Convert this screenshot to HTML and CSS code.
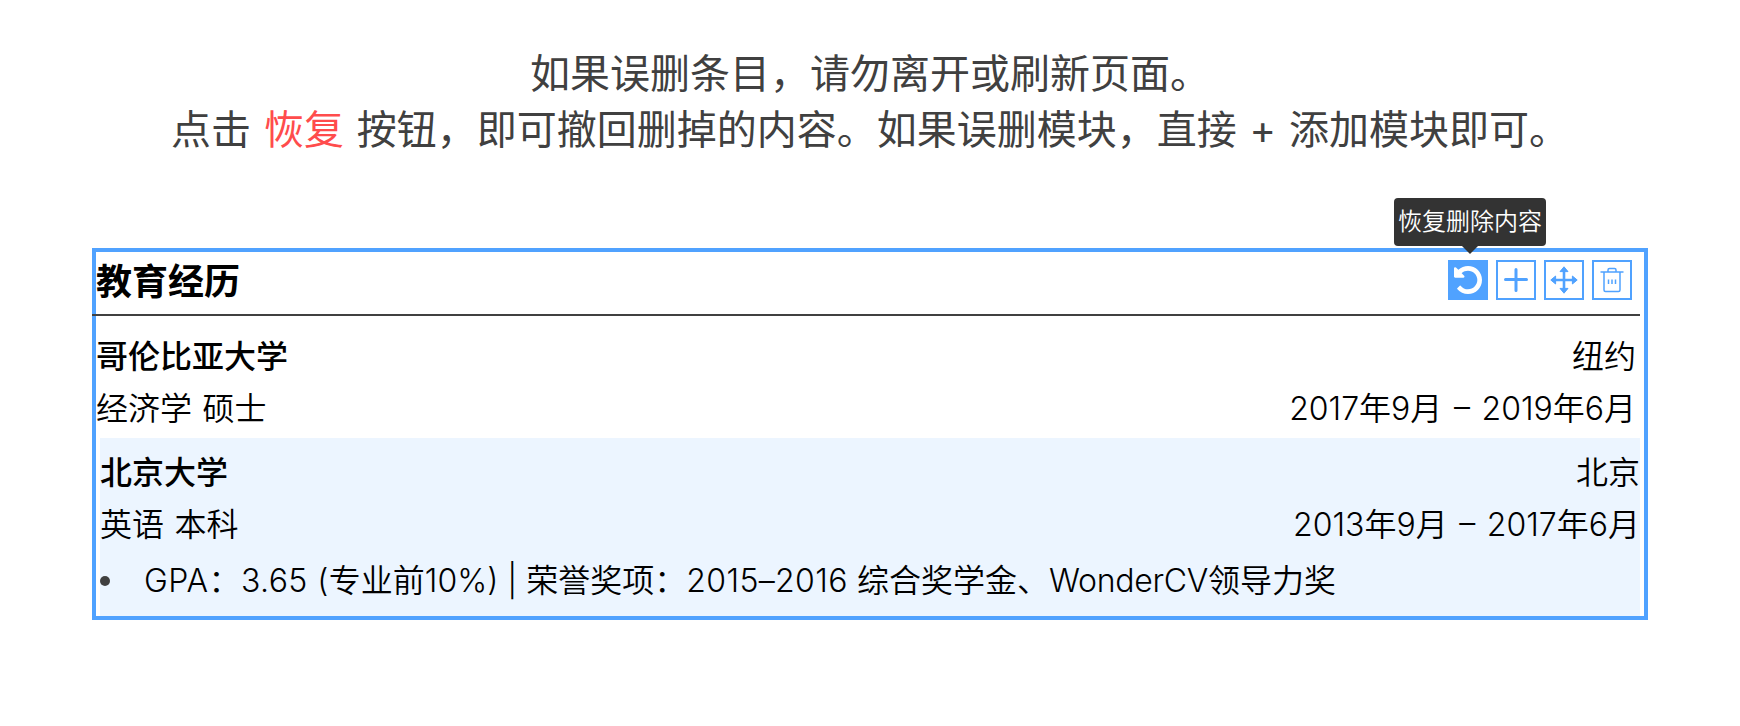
FILE: index.html
```html
<!DOCTYPE html>
<html lang="zh-CN">
<head>
<meta charset="utf-8">
<title>教育经历</title>
<link rel="stylesheet" href="styles.css">
</head>
<body>
<div class="intro">
  <p>如果误删条目，请勿离开或刷新页面。</p>
  <p>点击 <span class="accent">恢复</span> 按钮，即可撤回删掉的内容。如果误删模块，直接 + 添加模块即可。</p>
</div>
<section class="module">
  <header class="module-head">
    <h2>教育经历</h2>
    <div class="tools">
      <button class="tool active" aria-label="恢复删除内容">
        <svg width="28" height="28" viewBox="0 128 1536 1536"><path fill="currentColor" d="M1536 896q0 156-61 298t-164 245-245 164-298 61q-172 0-327-72.500t-264-204.500q-7-10-6.500-22.500t8.500-20.500l137-138q10-9 25-9 16 2 23 12 73 95 179 147t225 52q104 0 198.500-40.500t163.500-109.500 109.500-163.500 40.500-198.500-40.500-198.500-109.500-163.500-163.500-109.500-198.500-40.500q-98 0-188 35.500t-160 101.500l137 138q31 30 14 69-17 40-59 40h-448q-26 0-45-19t-19-45v-448q0-42 40-59 39-17 69 14l130 129q107-101 244.500-156.500t284.500-55.500q156 0 298 61t245 164 164 245 61 298z"/></svg>
        <span class="tip">恢复删除内容</span>
      </button>
      <button class="tool" aria-label="添加">
        <svg width="28" height="28" viewBox="0 0 28 28"><path fill="none" stroke="currentColor" stroke-width="3" stroke-linecap="round" d="M14 3.500v21M3.500 13.500h21"/></svg>
      </button>
      <button class="tool" aria-label="移动">
        <svg width="28" height="28" viewBox="0 0 28 28"><path fill="none" stroke="currentColor" stroke-width="2.600" d="M14 4v20M4 14h20"/><path fill="currentColor" stroke="currentColor" stroke-linejoin="round" d="M14 .8l4 4.800h-8zM14 27.200l4-4.800h-8zM.8 14l4.800-4v8zM27.200 14l-4.800-4v8z"/></svg>
      </button>
      <button class="tool" aria-label="删除">
        <svg width="28" height="28" viewBox="0 0 28 28"><path fill="none" stroke="currentColor" stroke-width="1.500" stroke-linejoin="round" d="M2.500 6h23M10 6V4q0-1.500 1.500-1.500h5Q18 2.500 18 4v2M6 6v18q0 1.500 1.500 1.500h13Q22 25.500 22 24V6"/><path fill="none" stroke="currentColor" stroke-width="1.500" d="M10.500 13.500v4.500M14 13.500v4.500M17.500 13.500v4.500"/></svg>
      </button>
    </div>
  </header>
  <article class="entry">
    <div class="row"><b>哥伦比亚大学</b><span>纽约</span></div>
    <div class="row"><span>经济学 硕士</span><span class="date">2017年9月 – 2019年6月</span></div>
  </article>
  <article class="entry selected">
    <div class="row"><b>北京大学</b><span>北京</span></div>
    <div class="row"><span>英语 本科</span><span class="date">2013年9月 – 2017年6月</span></div>
    <ul><li><p><span class="score">GPA：3.65 (</span>专业前10%) | 荣誉奖项：<span class="years">2015–2016 </span>综合奖学金、<span class="brand">WonderCV</span>领导力奖</p></li></ul>
  </article>
</section>
</body>
</html>
```
FILE: styles.css
```css
* { box-sizing: border-box; }
body {
  margin: 0;
  height: 726px;
  background: #fff;
  color: #000;
  font-family: Inter, "Noto Sans CJK SC", sans-serif;
  overflow: hidden;
}
p { margin: 0; }
.intro {
  padding-top: 46px;
  height: 248px;
  text-align: center;
  color: #404040;
  font-size: 40px;
  line-height: 56px;
  word-spacing: 1.6px;
  white-space: nowrap;
}
.accent { color: #ff4c4c; }
.module {
  width: 1556px;
  height: 372px;
  margin-left: 92px;
  border: 4px solid #50a2ff;
}
.module-head {
  display: flex;
  justify-content: space-between;
  width: 1548px;
  height: 64px;
  margin-left: -4px;
  padding: 8px 8px 0 4px;
  border-bottom: 2px solid #404040;
}
h2 { margin: 0; font-size: 36px; line-height: 44px; font-weight: 700; }
.tools { display: flex; gap: 8px; }
.tool {
  position: relative;
  display: flex;
  align-items: center;
  justify-content: center;
  width: 40px;
  height: 40px;
  padding: 0;
  border: 2px solid #50a2ff;
  background: #fff;
  color: #50a2ff;
  font-family: inherit;
}
.tool svg { flex: none; }
.tool.active { background: #50a2ff; color: #fff; }
.tip {
  position: absolute;
  left: -56px;
  bottom: 52px;
  width: 152px;
  height: 48px;
  border-radius: 4px;
  background: #333;
  color: #fff;
  font-size: 24px;
  line-height: 48px;
  font-weight: 350;
  text-align: center;
  white-space: nowrap;
}
.tip::after {
  content: "";
  position: absolute;
  left: 68px;
  top: 48px;
  border: 8px solid transparent;
  border-top-color: #333;
  border-bottom: 0;
}
.entry {
  height: 122px;
  padding: 15px 8px 0 0;
  font-size: 32px;
  line-height: 52px;
  font-weight: 350;
  word-spacing: 1.6px;
}
.entry.selected {
  height: 178px;
  margin: 0 4px;
  padding: 9px 0 0;
  background: #ecf5ff;
}
.row { display: flex; justify-content: space-between; }
.row b { font-weight: 500; }
.date { word-spacing: 2.6px; }
.score { letter-spacing: .45px; }
.years { letter-spacing: .35px; }
.brand { letter-spacing: -.3px; }
ul { margin: 4px 0 0; padding: 0; list-style: none; }
li { display: flex; align-items: center; white-space: nowrap; word-spacing: 0; }
li::before {
  content: "";
  width: 10px;
  height: 10px;
  margin-right: 34px;
  border-radius: 50%;
  background: #404040;
}
```
